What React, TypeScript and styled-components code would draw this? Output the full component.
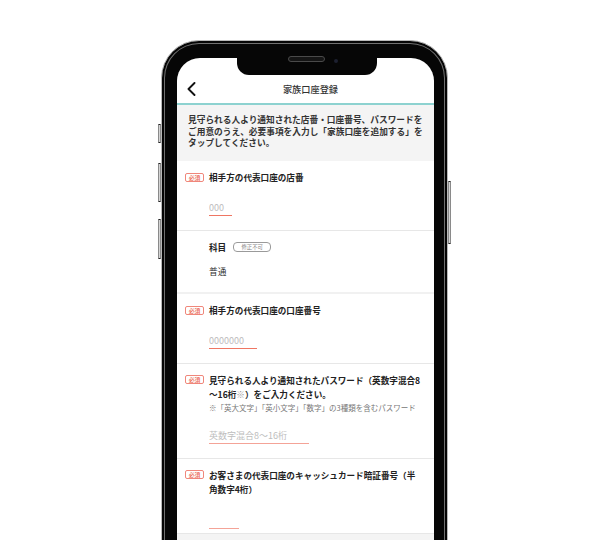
import React from 'react';
import styled, { createGlobalStyle } from 'styled-components';

const GlobalStyle = createGlobalStyle`
  html, body {
    margin: 0;
    padding: 0;
    background: #ffffff;
  }
  body {
    font-family: "Noto Sans CJK JP", "Noto Sans", sans-serif;
    color: #222;
  }
`;

export default function App() {
  return (
    <>
      <GlobalStyle />
      <Stage>
        <Phone>
          <SideButton $side="left" $top={83} $height={19} />
          <SideButton $side="left" $top={122} $height={39} />
          <SideButton $side="left" $top={178} $height={40} />
          <SideButton $side="right" $top={140} $height={63} />
          <Speaker />
          <Camera />
          <Screen>
            <Notch />
            <StatusArea />
            <Header>
              <BackButton aria-label="戻る">
                <svg width="9" height="14" viewBox="0 0 9 14">
                  <polyline points="7.5,1 1.5,7 7.5,13" fill="none" stroke="#111" strokeWidth="1.9" strokeLinecap="round" strokeLinejoin="round" />
                </svg>
              </BackButton>
              <Title>家族口座登録</Title>
              <span />
            </Header>
            <Intro>
              見守られる人より通知された店番・口座番号、パスワードを<br />
              ご用意のうえ、必要事項を入力し「家族口座を追加する」を<br />
              タップしてください。
            </Intro>

            <Section>
              <Required>必須</Required>
              <Content>
                <Label>相手方の代表口座の店番</Label>
                <Input placeholder="000" readOnly $width={23} $line="#ef7663" $gap={16} />
              </Content>
            </Section>

            <Section $thick>
              <span />
              <Content>
                <LabelRow>
                  <Label>科目</Label>
                  <Locked>修正不可</Locked>
                </LabelRow>
                <Value>普通</Value>
              </Content>
            </Section>

            <Section>
              <Required>必須</Required>
              <Content>
                <Label>相手方の代表口座の口座番号</Label>
                <Input placeholder="0000000" readOnly $width={48} $line="#ef7663" $gap={16} />
              </Content>
            </Section>

            <Section>
              <Required>必須</Required>
              <Content>
                <Label>
                  見守られる人より通知されたパスワード（英数字混合8<br />
                  〜16桁<Mark>※</Mark>）をご入力ください。
                </Label>
                <Note>※「英大文字」「英小文字」「数字」の3種類を含むパスワード</Note>
                <Input placeholder="英数字混合8〜16桁" readOnly $width={100} $line="#f4a397" $gap={15.5} />
              </Content>
            </Section>

            <Section $bottom={4}>
              <Required>必須</Required>
              <Content>
                <Label>
                  お客さまの代表口座のキャッシュカード暗証番号（半<br />
                  角数字4桁）
                </Label>
                <Input type="password" readOnly $width={30} $line="#f4a397" $gap={17} />
              </Content>
            </Section>
            <Footer />
          </Screen>
        </Phone>
      </Stage>
    </>
  );
}

const Stage = styled.div`
  height: 540px;
  overflow: hidden;
  display: flex;
  justify-content: center;
  padding-top: 40px;
  box-sizing: border-box;
`;

const Phone = styled.div`
  position: relative;
  flex: none;
  width: 287px;
  height: 620px;
  box-sizing: border-box;
  padding: 17px 13px 0 15px;
  margin-left: -1px;
  background: #060606;
  border: 1px solid #b9b9b9;
  border-radius: 38px;
  box-shadow: inset 0 0 0 2px #050505, inset 0 0 0 3px #707070;
`;

const SideButton = styled.div<{ $side: 'left' | 'right'; $top: number; $height: number }>`
  position: absolute;
  top: ${(p) => p.$top}px;
  ${(p) => (p.$side === 'left' ? 'left: -4px;' : 'right: -4px;')}
  box-sizing: border-box;
  width: 3px;
  height: ${(p) => p.$height}px;
  background: #d4d4d4;
  border: 1px solid #8a8a8a;
  border-top-color: #222;
  border-bottom-color: #222;
  border-radius: 1px;
`;

const Speaker = styled.div`
  position: absolute;
  z-index: 3;
  top: 15px;
  left: 126px;
  width: 35px;
  height: 4px;
  border-radius: 3px;
  background: #151515;
  border: 1px solid #4a4a4a;
`;

const Camera = styled.div`
  position: absolute;
  z-index: 3;
  top: 18px;
  left: 172px;
  width: 4px;
  height: 4px;
  border-radius: 50%;
  background: #1d2030;
`;

const Screen = styled.div`
  position: relative;
  height: 100%;
  background: #ffffff;
  border-radius: 23px 23px 0 0;
  overflow: hidden;
`;

const Notch = styled.div`
  position: absolute;
  top: 0;
  left: 60px;
  width: 140px;
  height: 17px;
  background: #060606;
  border-radius: 0 0 12px 12px;
`;

const StatusArea = styled.div`
  height: 17px;
`;

const Header = styled.div`
  height: 28px;
  display: grid;
  grid-template-columns: 1fr auto 1fr;
  align-items: center;
  border-bottom: 2px solid #8dd2d0;
  padding-left: 10px;
`;

const BackButton = styled.button`
  display: flex;
  align-items: center;
  justify-self: start;
  padding: 0;
  border: none;
  background: none;
`;

const Title = styled.h1`
  margin: 0;
  font-size: 9.2px;
  font-weight: 500;
  color: #333;
  line-height: 14px;
`;

const Intro = styled.p`
  margin: 0;
  padding: 9px 12px 12px 11px;
  background: #f4f4f4;
  font-size: 8.7px;
  line-height: 11.7px;
  font-weight: 700;
  color: #333;
  white-space: nowrap;
`;

const Section = styled.section<{ $thick?: boolean; $bottom?: number }>`
  display: grid;
  grid-template-columns: 19px 1fr;
  column-gap: 5px;
  padding: 9px 12px ${(p) => p.$bottom ?? 13.5}px 8px;
  background: #fff;
  border-bottom: ${(p) => (p.$thick ? '2px solid #f1f1f1' : '1px solid #e7e7e7')};
`;

const Required = styled.span`
  box-sizing: border-box;
  margin-top: 2.5px;
  width: 19px;
  height: 9px;
  border: 1px solid #f0877b;
  border-radius: 2px;
  color: #e95f4e;
  font-size: 5.8px;
  line-height: 7px;
  text-align: center;
  font-weight: 500;
`;

const Content = styled.div`
  display: flex;
  flex-direction: column;
  align-items: flex-start;
  min-width: 0;
`;

const LabelRow = styled.div`
  display: flex;
  align-items: center;
  gap: 7px;
`;

const Label = styled.div`
  font-size: 8.6px;
  line-height: 14px;
  font-weight: 700;
  color: #222;
  white-space: nowrap;
`;

const Mark = styled.span`
  color: #999;
  font-weight: 400;
`;

const Locked = styled.span`
  box-sizing: border-box;
  width: 38px;
  height: 10px;
  border: 1px solid #9a9a9a;
  border-radius: 4px;
  color: #8a8a8a;
  font-size: 5.4px;
  line-height: 8px;
  text-align: center;
`;

const Value = styled.div`
  margin-top: 11px;
  font-size: 8.7px;
  line-height: 14px;
  color: #333;
`;

const Note = styled.div`
  margin-top: 1px;
  font-size: 7.5px;
  line-height: 11px;
  color: #777;
  white-space: nowrap;
`;

const Input = styled.input<{ $width: number; $line: string; $gap: number }>`
  display: block;
  box-sizing: content-box;
  margin-top: ${(p) => p.$gap}px;
  width: ${(p) => p.$width}px;
  height: 15px;
  padding: 0;
  border: none;
  border-bottom: 1.5px solid ${(p) => p.$line};
  background: transparent;
  outline: none;
  font-family: inherit;
  font-size: 9px;
  color: #333;
  &::placeholder {
    color: #bdbdbd;
  }
`;

const Footer = styled.div`
  height: 60px;
  background: #f4f4f4;
`;
